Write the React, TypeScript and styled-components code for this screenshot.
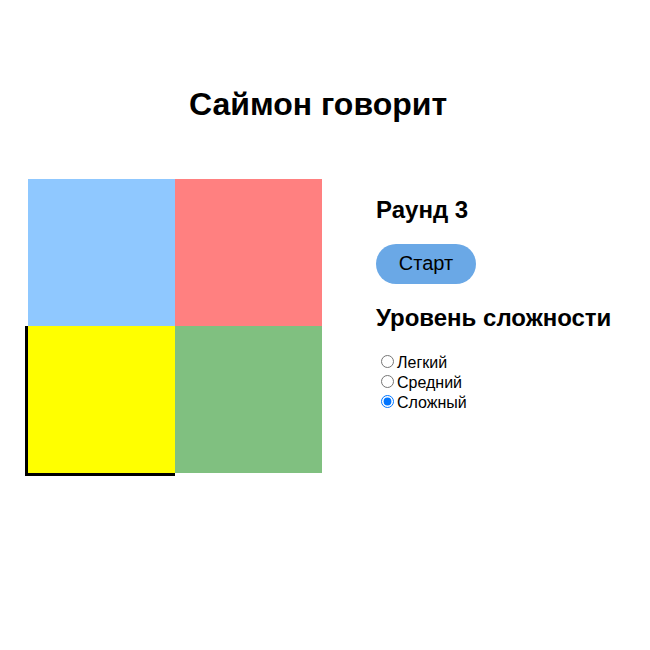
import styled, { createGlobalStyle } from 'styled-components'

const GlobalStyle = createGlobalStyle`
  body {
    margin: 0;
    font-family: "Liberation Sans", Arial, sans-serif;
    background: #ffffff;
    color: #000000;
  }
`

const Page = styled.div`
  width: 636px;
  min-height: 650px;
  padding-top: 86px;
  box-sizing: border-box;
`

const Title = styled.h1`
  margin: 0;
  font-size: 32px;
  line-height: 37px;
  font-weight: 700;
  text-align: center;
`

const Row = styled.div`
  display: flex;
  align-items: flex-start;
  gap: 54px;
  margin-top: 56px;
  padding-left: 28px;
`

const Board = styled.div`
  display: grid;
  grid-template-columns: 147px 147px;
  grid-template-rows: 147px 147px;
`

const Pad = styled.div<{ $color: string; $active?: boolean }>`
  background: ${(p) => p.$color};
  box-shadow: ${(p) =>
    p.$active ? '-3px 0 0 #000, 0 3px 0 #000, -3px 3px 0 #000' : 'none'};
`

const Panel = styled.div`
  padding-top: 17px;
`

const Heading = styled.h2`
  margin: 0 0 20px;
  font-size: 24px;
  line-height: 27.6px;
  font-weight: 700;
  white-space: nowrap;
`

const StartButton = styled.button`
  display: block;
  width: 100px;
  height: 40px;
  margin-bottom: 20px;
  border: none;
  border-radius: 20px;
  background: #6aa8e6;
  color: #000;
  font-family: inherit;
  font-size: 20px;
  cursor: pointer;
`

const Levels = styled.div`
  display: flex;
  flex-direction: column;
  padding-top: 1px;
`

const Level = styled.label`
  display: block;
  font-size: 16px;
  line-height: 20px;
  height: 20px;

  input {
    margin: 3px 3px 0 5px;
  }
`

const levels = [
  { id: 'easy', label: 'Легкий' },
  { id: 'medium', label: 'Средний' },
  { id: 'hard', label: 'Сложный' },
]

export default function App() {
  return (
    <Page>
      <GlobalStyle />
      <Title>Саймон говорит</Title>
      <Row>
        <Board>
          <Pad $color="#8fc8ff" />
          <Pad $color="#ff8080" />
          <Pad $color="#ffff00" $active />
          <Pad $color="#80c080" />
        </Board>
        <Panel>
          <Heading>Раунд 3</Heading>
          <StartButton>Старт</StartButton>
          <Heading>Уровень сложности</Heading>
          <Levels>
            {levels.map((l) => (
              <Level key={l.id}>
                <input type="radio" name="level" defaultChecked={l.id === 'hard'} />
                {l.label}
              </Level>
            ))}
          </Levels>
        </Panel>
      </Row>
    </Page>
  )
}
